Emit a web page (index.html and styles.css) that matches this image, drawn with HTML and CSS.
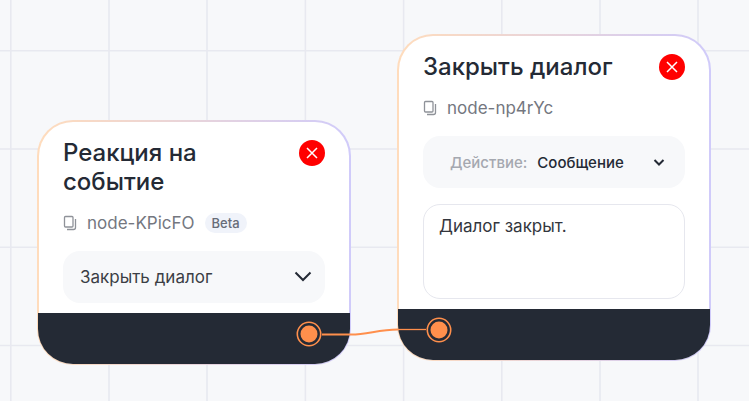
FILE: index.html
```html
<!DOCTYPE html>
<html lang="ru">

<head>
  <meta charset="UTF-8">
  <meta name="viewport" content="width=device-width, initial-scale=1.0">
  <title>Редактор сценария</title>
  <link rel="stylesheet" href="styles.css">
</head>

<body>
  <main class="canvas">
    <svg class="grid" aria-hidden="true">
      <defs>
        <pattern id="cells" width="491" height="491" patternUnits="userSpaceOnUse">
          <path class="grid-line" d="M10.8 0V491M109 0V491M207 0V491M305.400 0V491M403.600 0V491M0 50.700H491M0 149H491M0 247.200H491M0 345.500H491M0 443.600H491" />
        </pattern>
      </defs>
      <rect width="100%" height="100%" fill="url(#cells)" />
    </svg>

    <article class="node node-event">
      <div class="node-body">
        <header class="node-header">
          <h2>Реакция на событие</h2>
          <button class="close" type="button" aria-label="Удалить">
            <svg width="12" height="12" viewBox="0 0 12 12"><path d="M1 1L11 11M11 1L1 11" /></svg>
          </button>
        </header>
        <div class="node-id">
          <button class="copy" type="button" aria-label="Копировать">
            <svg width="14" height="16" viewBox="0 0 14 16"><rect x="1.500" y="1.500" width="8.500" height="10.500" rx="1" /><path d="M12.500 4V12.500Q12.500 14.500 10.500 14.500H4" /></svg>
          </button>
          <span>node-KPicFO</span>
          <span class="badge">Beta</span>
        </div>
        <div class="field">
          <select class="select" aria-label="Событие">
            <option>Закрыть диалог</option>
          </select>
          <svg class="chevron" width="18" height="12" viewBox="0 0 18 12" aria-hidden="true"><path d="M1.500 1.500L9 9L16.500 1.500" /></svg>
        </div>
      </div>
      <footer class="node-footer node-footer-out">
        <svg class="handle" width="26" height="26" viewBox="0 0 26 26" aria-hidden="true"><circle class="handle-ring" cx="13" cy="13" r="11.700" /><circle class="handle-dot" cx="13" cy="13" r="8.500" /></svg>
      </footer>
    </article>

    <article class="node node-close">
      <div class="node-body">
        <header class="node-header">
          <h2>Закрыть диалог</h2>
          <button class="close" type="button" aria-label="Удалить">
            <svg width="12" height="12" viewBox="0 0 12 12"><path d="M1 1L11 11M11 1L1 11" /></svg>
          </button>
        </header>
        <div class="node-id">
          <button class="copy" type="button" aria-label="Копировать">
            <svg width="14" height="16" viewBox="0 0 14 16"><rect x="1.500" y="1.500" width="8.500" height="10.500" rx="1" /><path d="M12.500 4V12.500Q12.500 14.500 10.500 14.500H4" /></svg>
          </button>
          <span>node-np4rYc</span>
        </div>
        <div class="field field-action">
          <label for="action">Действие:</label>
          <select class="select" id="action">
            <option>Сообщение</option>
          </select>
          <svg class="chevron" width="12" height="8" viewBox="0 0 12 8" aria-hidden="true"><path d="M1.500 2L6 6.500L10.500 2" /></svg>
        </div>
        <textarea class="message" aria-label="Текст сообщения">Диалог закрыт.</textarea>
      </div>
      <footer class="node-footer">
        <svg class="handle" width="26" height="26" viewBox="0 0 26 26" aria-hidden="true"><circle class="handle-ring" cx="13" cy="13" r="11.700" /><circle class="handle-dot" cx="13" cy="13" r="8.500" /></svg>
      </footer>
    </article>

    <svg class="edge" width="104" height="12" viewBox="0 0 104 12" aria-hidden="true">
      <path class="edge-thick" d="M0 8.500H29C46 8.500 56 3.500 76 3.500" />
      <path class="edge-thin" d="M76 3.500H104" />
    </svg>
  </main>
</body>

</html>
```

FILE: styles.css
```css
* {
  box-sizing: border-box;
  margin: 0;
  padding: 0;
  font-family: 'Inter', sans-serif;
}

body {
  background: #f7f8fa;
  color: #242a35;
}

button {
  border: none;
  background: none;
  cursor: pointer;
}

svg {
  fill: none;
}

.canvas {
  position: relative;
  height: 100vh;
  overflow: hidden;
}

.grid {
  display: block;
  width: 100%;
  height: 100%;
}

.grid-line {
  stroke: #e8e9f0;
  stroke-width: 1.6;
}

/* nodes */
.node {
  position: absolute;
  width: 314px;
  border: 2px solid transparent;
  border-bottom-width: 1px;
  border-radius: 36px;
  background:
    linear-gradient(#fff, #fff) padding-box,
    linear-gradient(90deg, #ffdcbc, #d0cbfa) border-box;
}

.node-event {
  left: 37px;
  top: 120px;
}

.node-close {
  left: 397px;
  top: 34px;
}

.node-body {
  padding: 16px 24px 10px;
}

.node-header {
  display: flex;
  justify-content: space-between;
  align-items: flex-start;
  gap: 40px;
}

.node-header h2 {
  font-size: 24px;
  line-height: 29px;
  font-weight: 500;
}

.close {
  display: flex;
  justify-content: center;
  align-items: center;
  flex-shrink: 0;
  width: 26px;
  height: 26px;
  margin-top: 2px;
  border-radius: 50%;
  background: #ff0000;
}

.close svg {
  stroke: #fff;
  stroke-width: 1.5;
}

.node-id {
  display: flex;
  align-items: center;
  gap: 10px;
  margin: 15px 0 16px;
  height: 24px;
  font-size: 17px;
  color: #74777f;
}

.copy {
  display: flex;
  width: 14px;
}

.copy svg {
  stroke: #8f9299;
  stroke-width: 1.3;
}

.badge {
  padding: 0 7px;
  border-radius: 10px;
  background: #f0f3fa;
  font-size: 13px;
  line-height: 20px;
  font-weight: 500;
  color: #676c78;
}

.field {
  display: flex;
  align-items: center;
  height: 52px;
  padding: 0 13px 0 17px;
  border-radius: 17px;
  background: #f7f8fa;
}

.select {
  flex: 1;
  min-width: 0;
  appearance: none;
  border: none;
  outline: none;
  background: none;
  font-size: 17px;
  color: #3b3e45;
}

.chevron {
  stroke: #242a35;
  stroke-width: 2;
  pointer-events: none;
}

.field-action {
  gap: 10px;
  padding: 0 20px 0 27px;
  font-size: 15px;
  font-weight: 500;
  color: #a5a8b0;
}

.field-action .select {
  font-size: 15px;
  font-weight: 500;
  color: #242a35;
}

.message {
  display: block;
  width: 100%;
  height: 95px;
  margin-top: 16px;
  padding: 10px 15px;
  border: 1px solid #e6e7ee;
  border-radius: 17px;
  outline: none;
  resize: none;
  font-size: 17px;
  line-height: 22px;
  color: #33363d;
}

.node-footer {
  display: flex;
  align-items: center;
  height: 51px;
  margin: 0 -1px;
  padding: 0 28px 9px;
  border-radius: 0 0 35px 35px;
  background: #242a35;
}

.node-footer-out {
  justify-content: flex-end;
}

.handle-ring {
  stroke: #ff8f4c;
  stroke-width: 1.6;
}

.handle-dot {
  fill: #ff8f4c;
}

/* connection between the two handles */
.edge {
  position: absolute;
  left: 322px;
  top: 326px;
  stroke: #ff8f4c;
}

.edge-thick {
  stroke-width: 2;
}

.edge-thin {
  stroke-width: 1.3;
}
```
